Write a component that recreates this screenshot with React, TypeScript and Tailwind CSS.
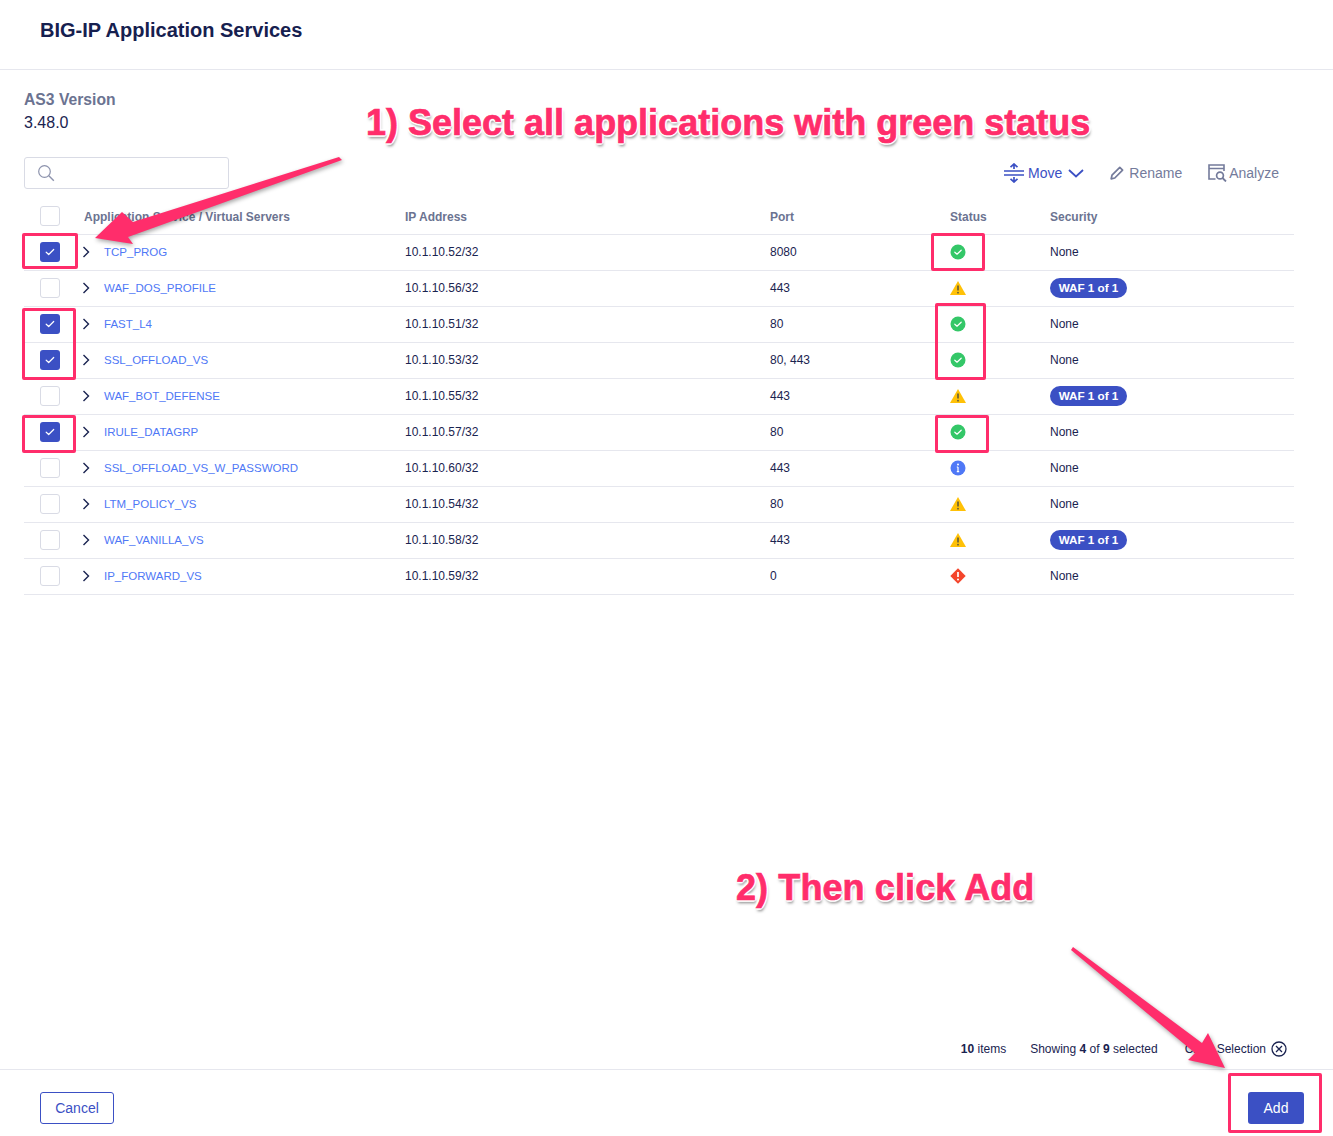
import React from "react";

const rows = [
  { name: "TCP_PROG", ip: "10.1.10.52/32", port: "8080", status: "ok", sec: "None", checked: true },
  { name: "WAF_DOS_PROFILE", ip: "10.1.10.56/32", port: "443", status: "warn", sec: "WAF", checked: false },
  { name: "FAST_L4", ip: "10.1.10.51/32", port: "80", status: "ok", sec: "None", checked: true },
  { name: "SSL_OFFLOAD_VS", ip: "10.1.10.53/32", port: "80, 443", status: "ok", sec: "None", checked: true },
  { name: "WAF_BOT_DEFENSE", ip: "10.1.10.55/32", port: "443", status: "warn", sec: "WAF", checked: false },
  { name: "IRULE_DATAGRP", ip: "10.1.10.57/32", port: "80", status: "ok", sec: "None", checked: true },
  { name: "SSL_OFFLOAD_VS_W_PASSWORD", ip: "10.1.10.60/32", port: "443", status: "info", sec: "None", checked: false },
  { name: "LTM_POLICY_VS", ip: "10.1.10.54/32", port: "80", status: "warn", sec: "None", checked: false },
  { name: "WAF_VANILLA_VS", ip: "10.1.10.58/32", port: "443", status: "warn", sec: "WAF", checked: false },
  { name: "IP_FORWARD_VS", ip: "10.1.10.59/32", port: "0", status: "err", sec: "None", checked: false },
];

function Status({ s }: { s: string }) {
  if (s === "ok")
    return (
      <svg width="16" height="16" viewBox="0 0 16 16">
        <circle cx="8" cy="8" r="7.5" fill="#34c768" />
        <path d="M4.8 8.2l2.2 2 4.2-4" fill="none" stroke="#fff" strokeWidth="1.2" strokeLinecap="round" strokeLinejoin="round" />
      </svg>
    );
  if (s === "warn")
    return (
      <svg width="16" height="16" viewBox="0 0 16 16">
        <path d="M8 1L16 15H0z" fill="#ffc107" />
        <path d="M8 5.5v5" stroke="#5f5a3a" strokeWidth="1.6" />
        <circle cx="8" cy="12.7" r="0.9" fill="#5f5a3a" />
      </svg>
    );
  if (s === "info")
    return (
      <svg width="16" height="16" viewBox="0 0 16 16">
        <circle cx="8" cy="8" r="7.5" fill="#4f78f6" />
        <path d="M8 7v4.5M6.8 7H8M6.8 11.7h2.4" stroke="#fff" strokeWidth="1.2" fill="none" />
        <circle cx="8" cy="4.6" r="1" fill="#fff" />
      </svg>
    );
  return (
    <svg width="16" height="16" viewBox="0 0 16 16">
      <path d="M8 0.3L15.7 8 8 15.7 0.3 8z" fill="#f4452b" />
      <path d="M8 4v5" stroke="#fff" strokeWidth="1.7" />
      <circle cx="8" cy="11.4" r="1" fill="#fff" />
    </svg>
  );
}

function Checkbox({ checked }: { checked: boolean }) {
  return checked ? (
    <span className="flex h-5 w-5 items-center justify-center rounded-[3px] bg-[#3b50c4]">
      <svg width="10" height="8" viewBox="0 0 10 8">
        <path d="M1.2 4.2l2.5 2.3 5-5" fill="none" stroke="#fff" strokeWidth="1.2" strokeLinecap="round" strokeLinejoin="round" />
      </svg>
    </span>
  ) : (
    <span className="block h-5 w-5 rounded-[3px] border border-[#d9dbe5] bg-white" />
  );
}

function Chevron() {
  return (
    <svg width="8" height="12" viewBox="0 0 8 12" className="ml-[20px] mr-[14px] shrink-0">
      <path d="M1.5 1l5 5-5 5" fill="none" stroke="#1a2350" strokeWidth="1.4" />
    </svg>
  );
}

const grid = "grid grid-cols-[60px_321px_365px_180px_100px_244px] items-center";

const label = "absolute whitespace-nowrap font-['Liberation_Sans',Arial,sans-serif] font-bold text-[#ff2d6b] [-webkit-text-stroke:0.7px_#ff2d6b] [text-shadow:0_0_2px_#fff,1px_1px_1px_#fff,-1px_-1px_1px_#fff,1px_-1px_1px_#fff,-1px_1px_1px_#fff,2px_0_1px_#fff,-2px_0_1px_#fff,0_2px_1px_#fff,0_-2px_1px_#fff,1px_3px_3px_#00000080]";

const box = "absolute rounded-[2px] border-[3px] border-[#ff2d6b]";

export default function App() {
  return (
    <div className="relative flex h-[1136px] w-[1333px] flex-col overflow-hidden bg-white font-['Liberation_Sans',Arial,sans-serif] text-[#1a2350]">
      <header className="flex h-[70px] shrink-0 items-start border-b border-[#e6e7ee] pl-10 pt-[17px]">
        <h1 className="text-[20px] font-bold leading-[26px] text-[#16204f]">BIG-IP Application Services</h1>
      </header>

      <main className="flex min-h-0 flex-1 flex-col px-6">
        <div className="mt-5 text-[15.7px] font-bold leading-5 text-[#6b7391]">AS3 Version</div>
        <div className="mt-[3px] text-[16px] leading-5 text-[#1a2350]">3.48.0</div>

        <div className="mt-6 flex h-8 items-center justify-between pr-[30px]">
          <div className="flex h-8 w-[205px] items-center rounded-[3px] border border-[#d9dbe5] pl-3">
            <svg width="18" height="18" viewBox="0 0 18 18">
              <circle cx="7.5" cy="7.5" r="5.8" fill="none" stroke="#8d93ad" strokeWidth="1.2" />
              <path d="M11.8 11.8l5 5" stroke="#8d93ad" strokeWidth="1.4" />
            </svg>
          </div>
          <div className="flex items-center text-[14px]">
            <svg width="20" height="20" viewBox="0 0 20 20" className="mr-[4px]">
              <path d="M0 8h20M0 12h20" stroke="#3b50c4" strokeWidth="1.6" />
              <path d="M10 1v5M10 14v5M6.5 4.2L10 1l3.5 3.2M6.5 15.8L10 19l3.5-3.2" fill="none" stroke="#3b50c4" strokeWidth="1.7" />
            </svg>
            <span className="text-[#3b50c4]">Move</span>
            <svg width="16" height="9" viewBox="0 0 16 9" className="ml-[6px]">
              <path d="M1 1l7 6.5L15 1" fill="none" stroke="#3b50c4" strokeWidth="1.8" />
            </svg>
            <svg width="14" height="14" viewBox="0 0 14 14" className="ml-[26px] mr-[5px]">
              <path d="M1.2 12.8l.8-3.6L9.8 1.4l2.8 2.8-7.8 7.8z" fill="none" stroke="#747b9b" strokeWidth="1.7" strokeLinejoin="round" />
            </svg>
            <span className="text-[#747b9b]">Rename</span>
            <svg width="19" height="18" viewBox="0 0 19 18" className="ml-[26px] mr-[2px]">
              <path d="M7.5 15H1V1h15v6M1 4.5h15" fill="none" stroke="#747b9b" strokeWidth="1.6" />
              <circle cx="12" cy="11.5" r="3.4" fill="none" stroke="#747b9b" strokeWidth="1.7" />
              <path d="M14.5 14l3.5 3.5" stroke="#747b9b" strokeWidth="1.8" />
            </svg>
            <span className="text-[#747b9b]">Analyze</span>
          </div>
        </div>

        <div className="mt-[10px] w-[1270px] text-[12px]">
          <div className={`${grid} h-[36px] border-b border-[#e6e7ee] font-bold text-[#6b7391]`}>
            <div className="-mt-px pl-4"><Checkbox checked={false} /></div>
            <div>Application Service / Virtual Servers</div>
            <div>IP Address</div>
            <div>Port</div>
            <div>Status</div>
            <div>Security</div>
          </div>
          {rows.map((r) => (
            <div key={r.name} className={`${grid} h-[36px] border-b border-[#e6e7ee] pb-px`}>
              <div className="pl-4"><Checkbox checked={r.checked} /></div>
              <div className="-ml-[22px] flex items-center whitespace-nowrap text-[11.5px] text-[#4f78f6]">
                <Chevron />
                <span className="pt-px">{r.name}</span>
              </div>
              <div>{r.ip}</div>
              <div>{r.port}</div>
              <div><Status s={r.status} /></div>
              <div>
                {r.sec === "WAF" ? (
                  <span className="inline-flex h-5 w-[77px] items-center justify-center rounded-full bg-[#3b50c4] text-[11.7px] font-bold text-white">WAF 1 of 1</span>
                ) : (
                  r.sec
                )}
              </div>
            </div>
          ))}
        </div>

        <div className="mt-auto flex h-[40px] items-center justify-end pr-[22px] text-[12px]">
          <span className="mr-[24px]"><b className="font-bold">10</b> items</span>
          <span className="mr-[27px]">Showing <b className="font-bold">4</b> of <b className="font-bold">9</b> selected</span>
          <span>Clear Selection</span>
          <svg width="16" height="16" viewBox="0 0 16 16" className="ml-[5px]">
            <circle cx="8" cy="8" r="7" fill="none" stroke="#1a2350" strokeWidth="1.3" />
            <path d="M5 5l6 6M11 5l-6 6" stroke="#1a2350" strokeWidth="1.3" />
          </svg>
        </div>
      </main>

      <footer className="flex h-[67px] shrink-0 items-start justify-between border-t border-[#e6e7ee] pl-10 pr-[29px] pt-[22px] text-[14px]">
        <button className="h-8 w-[74px] rounded-[3px] border border-[#3b50c4] text-[#3b50c4]">Cancel</button>
        <button className="h-8 w-[56px] rounded-[3px] bg-[#3b50c4] text-white">Add</button>
      </footer>

      {/* annotations over the page */}
      <div className={`${label} left-[366px] top-[101px] text-[36px] leading-[44px]`}>1) Select all applications with green status</div>
      <div className={`${label} left-[736px] top-[866px] text-[36px] leading-[44px] tracking-[0.1px]`}>2) Then click Add</div>

      <div className={`${box} left-[22px] top-[233px] h-[36px] w-[56px]`} />
      <div className={`${box} left-[22px] top-[308px] h-[72px] w-[54px]`} />
      <div className={`${box} left-[22px] top-[415px] h-[38px] w-[54px]`} />
      <div className={`${box} left-[931px] top-[233px] h-[38px] w-[54px]`} />
      <div className={`${box} left-[935px] top-[303px] h-[77px] w-[51px]`} />
      <div className={`${box} left-[935px] top-[415px] h-[38px] w-[54px]`} />
      <div className={`${box} left-[1228px] top-[1073px] h-[60px] w-[94px]`} />

      <svg width="1333" height="1136" viewBox="0 0 1333 1136" className="pointer-events-none absolute left-0 top-0 drop-shadow-[1px_2px_2px_rgba(0,0,0,0.35)]">
        <path d="M339 157L342 160L128 237L133 244L95 238L122 212L133 222Z" fill="#ff2d6b" />
        <path d="M1073 947L1071 950L1195 1053L1188 1060L1225 1068L1208 1033L1202 1043Z" fill="#ff2d6b" />
      </svg>
    </div>
  );
}
